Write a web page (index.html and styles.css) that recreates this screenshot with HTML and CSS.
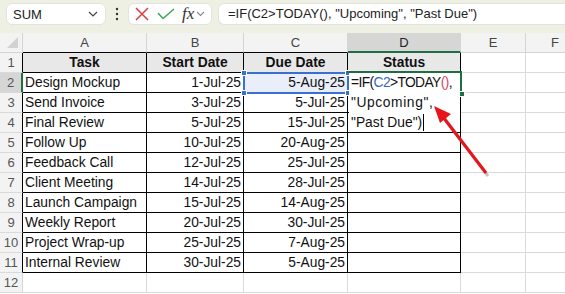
FILE: index.html
```html
<!DOCTYPE html>
<html lang="en">
<head>
    <meta charset="UTF-8">
    <title>Status Formula</title>
    <link rel="stylesheet" href="styles.css">
</head>
<body>
    <div class="page">
        <div class="toolbar">
            <div class="namebox">
                <span>SUM</span>
                <svg width="10" height="6" viewBox="0 0 10 6"><path d="M1 1 L5 5 L9 1" fill="none" stroke="#444" stroke-width="1.2"/></svg>
            </div>
            <div class="dots">
                <svg width="4" height="14" viewBox="0 0 4 14"><circle cx="2" cy="2" r="1.2" fill="#333"/><circle cx="2" cy="7" r="1.2" fill="#333"/><circle cx="2" cy="12" r="1.2" fill="#333"/></svg>
            </div>
            <div class="fxbox">
                <svg width="14" height="14" viewBox="0 0 14 14"><path d="M1 1 L13 13 M13 1 L1 13" stroke="#e0393e" stroke-width="1.5" fill="none"/></svg>
                <svg width="18" height="12" viewBox="0 0 18 12"><path d="M1 5 L6 10.5 L17 1" stroke="#3aa757" stroke-width="1.5" fill="none"/></svg>
                <span class="fx">fx</span>
                <svg width="9" height="6" viewBox="0 0 9 6"><path d="M1 1 L4.5 4.5 L8 1" fill="none" stroke="#888" stroke-width="1.1"/></svg>
            </div>
            <div class="formula">=IF(C2&gt;TODAY(), "Upcoming", "Past Due")</div>
        </div>

        <table class="grid">
            <colgroup>
                <col class="c-head">
                <col class="c-a">
                <col class="c-b">
                <col class="c-c">
                <col class="c-d">
                <col class="c-e">
                <col class="c-f">
            </colgroup>
            <thead>
                <tr>
                    <th class="corner"><span class="tri"></span></th>
                    <th class="colhead in">A</th>
                    <th class="colhead in">B</th>
                    <th class="colhead in">C</th>
                    <th class="colhead in active">D</th>
                    <th class="colhead">E</th>
                    <th class="colhead">F</th>
                </tr>
            </thead>
            <tbody>
                <tr class="title">
                    <td class="rowhead in">1</td>
                    <td class="cell">Task</td>
                    <td class="cell">Start Date</td>
                    <td class="cell">Due Date</td>
                    <td class="cell">Status</td>
                    <td></td><td></td>
                </tr>
                <tr>
                    <td class="rowhead in active">2</td>
                    <td class="cell">Design Mockup</td>
                    <td class="cell num">1-Jul-25</td>
                    <td class="cell num ref">5-Aug-25</td>
                    <td class="cell"></td>
                    <td></td><td></td>
                </tr>
                <tr>
                    <td class="rowhead in">3</td>
                    <td class="cell">Send Invoice</td>
                    <td class="cell num">3-Jul-25</td>
                    <td class="cell num">5-Jul-25</td>
                    <td class="cell"></td>
                    <td></td><td></td>
                </tr>
                <tr>
                    <td class="rowhead in">4</td>
                    <td class="cell">Final Review</td>
                    <td class="cell num">5-Jul-25</td>
                    <td class="cell num">15-Jul-25</td>
                    <td class="cell"></td>
                    <td></td><td></td>
                </tr>
                <tr>
                    <td class="rowhead in">5</td>
                    <td class="cell">Follow Up</td>
                    <td class="cell num">10-Jul-25</td>
                    <td class="cell num">20-Aug-25</td>
                    <td class="cell"></td>
                    <td></td><td></td>
                </tr>
                <tr>
                    <td class="rowhead in">6</td>
                    <td class="cell">Feedback Call</td>
                    <td class="cell num">12-Jul-25</td>
                    <td class="cell num">25-Jul-25</td>
                    <td class="cell"></td>
                    <td></td><td></td>
                </tr>
                <tr>
                    <td class="rowhead in">7</td>
                    <td class="cell">Client Meeting</td>
                    <td class="cell num">14-Jul-25</td>
                    <td class="cell num">28-Jul-25</td>
                    <td class="cell"></td>
                    <td></td><td></td>
                </tr>
                <tr>
                    <td class="rowhead in">8</td>
                    <td class="cell">Launch Campaign</td>
                    <td class="cell num">15-Jul-25</td>
                    <td class="cell num">14-Aug-25</td>
                    <td class="cell"></td>
                    <td></td><td></td>
                </tr>
                <tr>
                    <td class="rowhead in">9</td>
                    <td class="cell">Weekly Report</td>
                    <td class="cell num">20-Jul-25</td>
                    <td class="cell num">30-Jul-25</td>
                    <td class="cell"></td>
                    <td></td><td></td>
                </tr>
                <tr>
                    <td class="rowhead in">10</td>
                    <td class="cell">Project Wrap-up</td>
                    <td class="cell num">25-Jul-25</td>
                    <td class="cell num">7-Aug-25</td>
                    <td class="cell"></td>
                    <td></td><td></td>
                </tr>
                <tr>
                    <td class="rowhead in">11</td>
                    <td class="cell">Internal Review</td>
                    <td class="cell num">30-Jul-25</td>
                    <td class="cell num">5-Aug-25</td>
                    <td class="cell"></td>
                    <td></td><td></td>
                </tr>
                <tr>
                    <td class="rowhead">12</td>
                    <td></td><td></td><td></td><td></td><td></td><td></td>
                </tr>
            </tbody>
        </table>

        <!-- overlays: reference frame on C2, in-cell editor on D2 -->
        <div class="refbox">
            <i class="h tl"></i><i class="h tr"></i><i class="h bl"></i><i class="h br"></i>
        </div>
        <div class="editor">
            <div class="line-1">=IF(<span class="blue">C2</span>&gt;TODAY<span class="red">()</span>,</div>
            <div class="line-2">"Upcoming",</div>
            <div>"Past Due")<span class="caret"></span></div>
        </div>
        <div class="selbox"><i class="h br"></i></div>

        <svg class="arrow" width="565" height="294" viewBox="0 0 565 294">
            <line x1="488" y1="176" x2="445" y2="119" stroke="#9a9a9a" stroke-width="3" opacity="0.6"/>
            <line x1="486" y1="173" x2="443" y2="117" stroke="#e8141c" stroke-width="3"/>
            <polygon points="434,106 451,114 440,123" fill="#e8141c"/>
        </svg>
    </div>
</body>
</html>
```

FILE: styles.css
```css
* {
    box-sizing: border-box;
}

body {
    margin: 0;
    font-family: "Liberation Sans", Arial, sans-serif;
    background: #ffffff;
}

.page {
    position: relative;
    width: 565px;
    height: 294px;
    overflow: hidden;
}

/* Formula bar */
.toolbar {
    height: 33px;
    background: #eef0e4;
    display: flex;
    align-items: flex-start;
    padding: 3px 0 0 6px;
}

.namebox {
    width: 100px;
    height: 22px;
    background: #fff;
    border: 1px solid #e2e3dc;
    border-radius: 6px;
    display: flex;
    align-items: center;
    justify-content: space-between;
    padding: 0 7px 0 6px;
    font-size: 13px;
    color: #222;
}

.dots {
    width: 22px;
    height: 22px;
    display: flex;
    align-items: center;
    justify-content: center;
}

.fxbox {
    width: 84px;
    height: 22px;
    background: #fff;
    border: 1px solid #e2e3dc;
    border-radius: 6px;
    display: flex;
    align-items: center;
    padding: 0 0 0 6px;
    gap: 8px;
}

.fxbox .fx {
    font-family: "Liberation Serif", "Times New Roman", serif;
    font-style: italic;
    font-size: 17px;
    color: #333;
    margin-left: -1px;
    margin-right: -6px;
}

.formula {
    flex: 1;
    margin-left: 6px;
    height: 22px;
    background: #fff;
    border: 1px solid #e2e3dc;
    border-right: none;
    border-radius: 6px 0 0 6px;
    padding: 0 0 0 9px;
    font-size: 13px;
    line-height: 20px;
    color: #222;
    white-space: nowrap;
}

/* Sheet grid */
.grid {
    table-layout: fixed;
    border-collapse: separate;
    border-spacing: 0;
    width: 585px;
}

.c-head { width: 23px; }
.c-a { width: 124px; }
.c-b { width: 97px; }
.c-c { width: 104px; }
.c-d { width: 113px; }
.c-e { width: 65px; }
.c-f { width: 59px; }

th, td {
    height: 20px;
    padding: 0 2px 0 2px;
    border-right: 1px solid #dadada;
    border-bottom: 1px solid #dadada;
    font-size: 13.8px;
    font-weight: normal;
    color: #111;
    white-space: nowrap;
    overflow: hidden;
}

th {
    background: #f3f3f3;
    color: #444;
    font-size: 13px;
    text-align: center;
    border-right-color: #d4d4d4;
    border-bottom-color: #d4d4d4;
}

.corner {
    position: relative;
}

.tri {
    position: absolute;
    right: 4px;
    bottom: 4px;
    width: 0;
    height: 0;
    border-left: 11px solid transparent;
    border-bottom: 11px solid #d2d2d2;
}

.colhead.in {
    border-bottom-color: #000;
}

.colhead.active {
    background: #d6d6d6;
    border-bottom: 2px solid #1e6e41;
    color: #222;
}

.rowhead {
    background: #f3f3f3;
    color: #555;
    font-size: 13px;
    text-align: center;
    padding: 0;
    border-right-color: #d4d4d4;
}

.rowhead.in {
    border-right-color: #000;
}

.rowhead.active {
    background: #d6d6d6;
    border-right: 2px solid #1e6e41;
}

.cell {
    border-right-color: #000;
    border-bottom-color: #000;
}

.title .cell {
    background: #e8e8e8;
    font-weight: bold;
    text-align: center;
}

.num {
    text-align: right;
}

.ref {
    background: #e9eef8;
}

/* Overlays */
.refbox {
    position: absolute;
    left: 243px;
    top: 72px;
    width: 106px;
    height: 22px;
    border: 2px solid #3a6fd0;
}

.h {
    position: absolute;
    width: 6px;
    height: 6px;
    background: #3a6fd0;
    border: 1px solid #fff;
}

.tl { left: -4px; top: -4px; }
.tr { right: -4px; top: -4px; }
.bl { left: -4px; bottom: -4px; }
.br { right: -4px; bottom: -4px; }

.editor {
    position: absolute;
    left: 349px;
    top: 73px;
    width: 111px;
    height: 59px;
    background: #fff;
    padding: 0 0 0 2px;
    font-size: 13.8px;
    line-height: 20px;
    color: #111;
    white-space: nowrap;
}

.editor div {
    height: 20px;
}

.editor .line-1 {
    letter-spacing: -0.6px;
}

.editor .line-2 {
    letter-spacing: 0.6px;
}

.blue {
    color: #3465c8;
}

.red {
    color: #d6445e;
}

.caret {
    display: inline-block;
    width: 1px;
    height: 17px;
    background: #000;
    vertical-align: -4px;
    margin-left: 1px;
}

.selbox {
    position: absolute;
    left: 347px;
    top: 71px;
    width: 115px;
    height: 22px;
    border-top: 2px solid #1e6e41;
    border-right: 2px solid #1e6e41;
}

.selbox .h {
    background: #1e6e41;
    right: -5px;
    bottom: -4px;
}

.arrow {
    position: absolute;
    left: 0;
    top: 0;
    pointer-events: none;
}
```
